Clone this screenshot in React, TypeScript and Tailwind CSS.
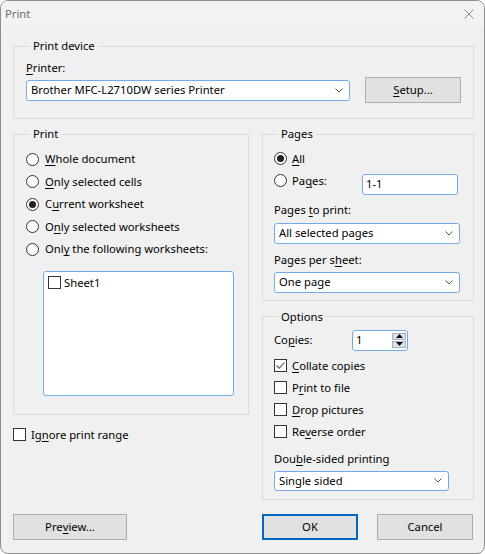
import type { ReactNode } from "react";

const FONT = { fontFamily: '"Noto Sans", "Open Sans", sans-serif' };

// underline the access-key letter
function K({ children }: { children: ReactNode }) {
    return <span className="underline underline-offset-[2px] decoration-1">{children}</span>;
}

function Group({ title, className, children }: { title: string; className?: string; children: ReactNode }) {
    return (
        <fieldset className={`border border-[#dcdcdc] ${className ?? ""}`}>
            <legend className="ml-[5px] px-[2px] leading-[16px]">{title}</legend>
            {children}
        </fieldset>
    );
}

function Radio({ checked }: { checked?: boolean }) {
    return (
        <span className="flex h-[13px] w-[13px] shrink-0 items-center justify-center rounded-full border border-[#333] bg-white">
            {checked && <span className="h-[7px] w-[7px] rounded-full bg-[#222]" />}
        </span>
    );
}

function Check({ checked }: { checked?: boolean }) {
    return (
        <span className="flex h-[13px] w-[13px] shrink-0 items-center justify-center border border-[#333] bg-white">
            {checked && (
                <svg width="11" height="11" viewBox="0 0 11 11">
                    <path d="M1.5 5.5 L4.2 8.2 L9.5 2.5" fill="none" stroke="#555" strokeWidth="1.1" />
                </svg>
            )}
        </span>
    );
}

function Chevron() {
    return (
        <svg width="8" height="5" viewBox="0 0 8 5" className="shrink-0">
            <path d="M0.5 0.5 L4 4 L7.5 0.5" fill="none" stroke="#555" strokeWidth="1" />
        </svg>
    );
}

function Combo({ value, className }: { value: string; className: string }) {
    return (
        <div
            className={`flex items-center justify-between rounded-[3px] border border-[#72aaeb] bg-white pl-[4px] pr-[6px] ${className}`}
        >
            <span className="leading-[16px]">{value}</span>
            <Chevron />
        </div>
    );
}

function Button({ children, className }: { children: ReactNode; className: string }) {
    return (
        <button className={`flex h-[26px] items-center justify-center bg-[#e1e1e1] leading-[16px] ${className}`}>
            {children}
        </button>
    );
}

function RadioRow({ checked, children }: { checked?: boolean; children: ReactNode }) {
    return (
        <div className="flex h-[22.5px] items-center gap-[6px]">
            <Radio checked={checked} />
            <span className="leading-[16px]">{children}</span>
        </div>
    );
}

function CheckRow({ checked, children }: { checked?: boolean; children: ReactNode }) {
    return (
        <div className="flex h-[22px] items-center gap-[5px]">
            <Check checked={checked} />
            <span className="leading-[16px]">{children}</span>
        </div>
    );
}

export default function App() {
    return (
        <div
            style={FONT}
            className="flex h-[554px] w-[485px] flex-col overflow-hidden rounded-[8px] border border-[#8e8e8e] bg-[#f0f0f0] text-[11.25px] text-black"
        >
            {/* title bar */}
            <div className="flex h-[25px] shrink-0 items-center justify-between bg-[#f3f3f3] pl-[4px] pr-[10px]">
                <span className="leading-[16px] text-[#6b6b6b]">Print</span>
                <svg width="10" height="10" viewBox="0 0 10 10">
                    <path d="M0.5 0.5 L9.5 9.5 M9.5 0.5 L0.5 9.5" stroke="#8a8a8a" strokeWidth="1" />
                </svg>
            </div>

            <div className="pl-[12px] pr-[10px] pt-[12px]">
                <Group title="Print device" className="px-[12px] pb-[15px]">
                    <div className="mt-[6px] leading-[16px]">
                        <K>P</K>rinter:
                    </div>
                    <div className="mt-[1px] flex items-center">
                        <Combo value="Brother MFC-L2710DW series Printer" className="h-[21px] w-[324px]" />
                        <Button className="ml-[15px] h-[25px] w-[96px] border border-[#adadad]">
                            <K>S</K>etup...
                        </Button>
                    </div>
                </Group>

                <div className="mt-[7px] grid grid-cols-[236px_212px] gap-x-[13px]">
                    {/* left column */}
                    <div className="flex flex-col">
                        <Group title="Print" className="pl-[12px] pb-[18px]">
                            <div className="mt-[6px] flex flex-col">
                                <RadioRow>
                                    <K>W</K>hole document
                                </RadioRow>
                                <RadioRow>
                                    <K>O</K>nly selected cells
                                </RadioRow>
                                <RadioRow checked>
                                    C<K>u</K>rrent worksheet
                                </RadioRow>
                                <RadioRow>
                                    O<K>n</K>ly selected worksheets
                                </RadioRow>
                                <RadioRow>
                                    Onl<K>y</K> the following worksheets:
                                </RadioRow>
                            </div>
                            <div className="ml-[17px] mt-[10px] h-[125px] w-[191px] rounded-[3px] border border-[#72aaeb] bg-white pl-[4px] pt-[4px]">
                                <div className="flex items-center gap-[3px]">
                                    <Check />
                                    <span className="leading-[14px]">Sheet1</span>
                                </div>
                            </div>
                        </Group>
                        <div className="mt-[12px] flex h-[16px] items-center gap-[5px]">
                            <Check />
                            <span className="leading-[16px]">
                                Ig<K>n</K>ore print range
                            </span>
                        </div>
                    </div>

                    {/* right column */}
                    <div className="flex flex-col">
                        <Group title="Pages" className="pl-[11px] pr-[13px] pb-[7px]">
                            <div className="mt-[5.5px] flex h-[22px] items-center gap-[5px]">
                                <Radio checked />
                                <span className="leading-[16px]">
                                    <K>A</K>ll
                                </span>
                            </div>
                            <div className="flex items-start">
                                <div className="flex h-[22px] w-[88px] items-center gap-[5px]">
                                    <Radio />
                                    <span className="leading-[16px]">
                                        Pa<K>g</K>es:
                                    </span>
                                </div>
                                <div className="mt-[4px] flex h-[21px] w-[96px] items-center rounded-[3px] border border-[#72aaeb] bg-white pl-[3px] leading-[16px]">
                                    1-1
                                </div>
                            </div>
                            <div className="mt-[7px] leading-[16px]">
                                Pages <K>t</K>o print:
                            </div>
                            <Combo value="All selected pages" className="mt-[5px] h-[21px] w-[186px]" />
                            <div className="mt-[8px] leading-[16px]">
                                Pages per s<K>h</K>eet:
                            </div>
                            <Combo value="One page" className="mt-[4px] h-[21px] w-[186px]" />
                        </Group>

                        <Group title="Options" className="mt-[8px] pl-[11px] pr-[13px] pb-[8px]">
                            <div className="mt-[5px] flex items-center">
                                <span className="w-[78px] leading-[16px]">
                                    Co<K>p</K>ies:
                                </span>
                                <div className="flex h-[21px] w-[56px] items-center justify-between rounded-[3px] border border-[#72aaeb] bg-white pl-[3px] pr-[1px]">
                                    <span className="leading-[16px]">1</span>
                                    <div className="flex flex-col gap-[1px]">
                                        <div className="flex h-[7px] w-[14px] items-center justify-center border border-[#9fb4cc] bg-[#e2e2e2]">
                                            <svg width="7" height="4" viewBox="0 0 7 4">
                                                <path d="M0 4 L3.5 0 L7 4 Z" fill="#111" />
                                            </svg>
                                        </div>
                                        <div className="flex h-[7px] w-[14px] items-center justify-center border border-[#9fb4cc] bg-[#e2e2e2]">
                                            <svg width="7" height="4" viewBox="0 0 7 4">
                                                <path d="M0 0 L3.5 4 L7 0 Z" fill="#111" />
                                            </svg>
                                        </div>
                                    </div>
                                </div>
                            </div>
                            <div className="mt-[4px] flex flex-col">
                                <CheckRow checked>
                                    <K>C</K>ollate copies
                                </CheckRow>
                                <CheckRow>
                                    P<K>r</K>int to file
                                </CheckRow>
                                <CheckRow>
                                    <K>D</K>rop pictures
                                </CheckRow>
                                <CheckRow>
                                    Re<K>v</K>erse order
                                </CheckRow>
                            </div>
                            <div className="mt-[8px] leading-[16px]">
                                Dou<K>b</K>le-sided printing
                            </div>
                            <Combo value="Single sided" className="mt-[4px] h-[20px] w-[175px]" />
                        </Group>
                    </div>
                </div>

                {/* dialog buttons */}
                <div className="mt-[14px] grid grid-cols-[236px_212px] gap-x-[13px]">
                    <Button className="w-[114px] border border-[#adadad]">
                        Pre<K>v</K>iew...
                    </Button>
                    <div className="flex gap-[19px]">
                        <Button className="w-[96px] border-2 border-[#0067c0]">OK</Button>
                        <Button className="w-[96px] border border-[#adadad]">Cancel</Button>
                    </div>
                </div>
            </div>
        </div>
    );
}
